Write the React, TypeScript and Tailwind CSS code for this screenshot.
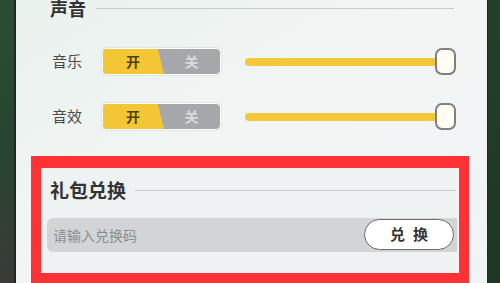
import React from 'react';

const font = { fontFamily: '"Noto Sans CJK SC", "Noto Sans", sans-serif' };

const Toggle: React.FC = () => (
  <div className="relative flex h-[27px] w-[119px] rounded-[5px] border border-white bg-[#a5a7aa] overflow-hidden shadow-[0_0_0_1px_#e2e4e5]">
    <div className="absolute inset-y-0 left-0 w-[61px] bg-[#f3c635] [clip-path:polygon(0_0,90%_0,100%_100%,0_100%)]" />
    <span className="relative z-10 flex w-[60px] items-center justify-center text-[14px] font-bold text-[#4e4212]">开</span>
    <span className="relative z-10 flex flex-1 items-center justify-center text-[14px] font-bold text-[#d9dadb]">关</span>
  </div>
);

const Slider: React.FC = () => (
  <div className="relative ml-[24px] flex h-[27px] w-[211px] items-center">
    <div className="h-[8px] w-[194px] rounded-full bg-[#f2c73a]" />
    <div className="absolute right-0 top-0 h-[27px] w-[21px] rounded-[7px] border-2 border-[#7f8081] bg-[#fffdf1]" />
  </div>
);

const SoundRow: React.FC<{ label: string }> = ({ label }) => (
  <div className="flex items-center">
    <span className="ml-[21px] w-[50px] text-[15px] text-[#4a4a4a]">{label}</span>
    <Toggle />
    <Slider />
  </div>
);

export default function App() {
  return (
    <div className="flex h-[283px] w-[500px] overflow-hidden" style={font}>
      <div className="w-[14px] bg-gradient-to-b from-[#2c4d33] via-[#274530] to-[#3a3b38]" />
      <div className="w-[2px] bg-[#1c2a21]" />
      <div className="flex flex-1 flex-col bg-gradient-to-br from-[#eaf2ee] via-[#f2f5f4] to-[#f1f4f5] pl-[15px] pr-[18px]">
        <div className="-mt-[3px] flex items-center">
          <span className="ml-[19px] text-[18px] font-bold leading-[22px] text-[#333]">声音</span>
          <div className="ml-[10px] mr-[15px] h-px flex-1 bg-[#c9cccd]" />
        </div>
        <div className="mt-[29px] flex flex-col gap-[28px]">
          <SoundRow label="音乐" />
          <SoundRow label="音效" />
        </div>
        <div className="mt-[26px] flex flex-1 flex-col border-x-[10px] border-t-[12px] border-b-[10px] border-[#fe3134] bg-[#eef2f3]">
          <div className="mt-[10px] flex items-center">
            <span className="ml-[9px] text-[19px] font-bold leading-[24px] text-[#333]">礼包兑换</span>
            <div className="ml-[8px] mr-[3px] h-px flex-1 bg-[#c9cccd]" />
          </div>
          <div className="relative ml-[6px] mr-[2px] mt-[16px] flex h-[34px] items-center rounded-l-[6px] bg-[#d2d4d5]">
            <span className="ml-[6px] text-[14px] text-[#8b8d8f]">请输入兑换码</span>
            <div className="absolute right-[3px] top-[1px] flex h-[31px] w-[90px] items-center justify-center rounded-full border-[1.5px] border-[#6b6b6b] bg-white text-[15px] font-bold tracking-[8px] text-[#333]">
              <span className="ml-[8px]">兑换</span>
            </div>
          </div>
        </div>
      </div>
      <div className="w-[1px] bg-[#1b2a20]" />
      <div className="w-[12px] bg-gradient-to-b from-[#23402b] to-[#1f3625]" />
    </div>
  );
}
